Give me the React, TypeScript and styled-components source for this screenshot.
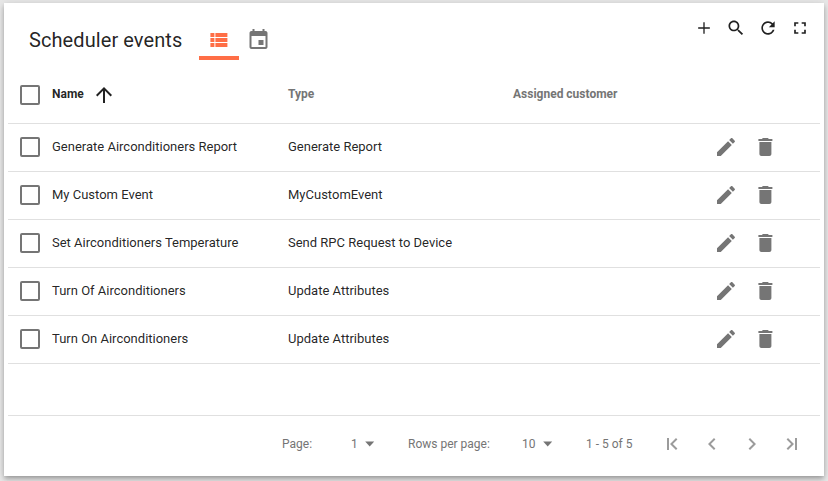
import React from "react";
import styled, { createGlobalStyle } from "styled-components";

const GlobalStyle = createGlobalStyle`
  * { box-sizing: border-box; }
  html, body { margin: 0; height: 100%; background: #e8e8e8; overflow: hidden; }
  body { font-family: Roboto, "Liberation Sans", sans-serif; color: rgba(0, 0, 0, 0.87); }
`;

const Card = styled.main`
  display: flex;
  flex-direction: column;
  width: 820px;
  height: 473px;
  margin: 3px 4px 5px;
  padding: 0 4px;
  background: #fff;
  box-shadow: 0 2px 4px -1px rgba(0, 0, 0, 0.2), 0 4px 5px 0 rgba(0, 0, 0, 0.14),
    0 1px 10px 0 rgba(0, 0, 0, 0.12);
`;

const Toolbar = styled.header`
  display: flex;
  align-items: flex-start;
  height: 61px;
  padding-left: 21px;
`;

const Title = styled.h1`
  width: 170px;
  margin: 25px 0 0;
  font-size: 20px;
  font-weight: 400;
  line-height: 24px;
  letter-spacing: 0.08px;
  white-space: nowrap;
`;

const ViewTab = styled.button<{ $active?: boolean }>`
  display: flex;
  justify-content: center;
  align-items: flex-start;
  width: 40px;
  height: 40px;
  margin-top: 17px;
  padding: 8px 0 0;
  border: 0;
  border-bottom: 4px solid ${(p) => (p.$active ? "#ff6e46" : "transparent")};
  background: none;
  color: ${(p) => (p.$active ? "#ff6e46" : "#757575")};
`;

const Actions = styled.div`
  display: flex;
  margin: 9px 4px 0 auto;
`;

const IconButton = styled.button<{ $size: number; $color: string }>`
  display: flex;
  align-items: center;
  justify-content: center;
  width: ${(p) => p.$size}px;
  height: ${(p) => p.$size}px;
  padding: 0;
  border: 0;
  background: none;
  color: ${(p) => p.$color};
`;

const Glyph = styled.svg`
  display: block;
  flex: none;
  fill: currentColor;
`;

const Row = styled.div`
  display: grid;
  grid-template-columns: 44px 236px 225px 185px 1fr;
  align-items: center;
  height: 48px;
  padding-bottom: 1px;
  border-bottom: 1px solid #e0e0e0;
  font-size: 13px;
  white-space: nowrap;
`;

const HeadRow = styled(Row)`
  height: 60px;
  padding: 2px 0 0;
  font-size: 12px;
  font-weight: 700;
  color: #757575;
`;

const Checkbox = styled.span`
  width: 20px;
  height: 20px;
  margin-left: 12px;
  border: 2px solid #757575;
  border-radius: 2px;
`;

const Label = styled.span`
  padding-bottom: 1px;
`;

const HeadLabel = styled.span`
  padding-bottom: 2px;
`;

const SortLabel = styled.span`
  display: flex;
  align-items: center;
  gap: 8px;
  color: rgba(0, 0, 0, 0.87);
`;

const RowActions = styled.div`
  display: flex;
  padding-left: 8px;
`;

const Spacer = styled.div`
  flex: 1;
  border-bottom: 1px solid #e0e0e0;
`;

const Footer = styled.footer`
  display: flex;
  align-items: center;
  justify-content: flex-end;
  height: 60px;
  padding: 0 8px 4px 0;
  font-size: 12px;
  color: #757575;
  white-space: nowrap;
`;

const FooterText = styled.span<{ $width: number }>`
  width: ${(p) => p.$width}px;
`;

const Select = styled.span<{ $width: number }>`
  display: flex;
  align-items: center;
  gap: 7px;
  width: ${(p) => p.$width}px;
`;

const icons = {
  list: "M4 14h4v-4H4v4zm0 5h4v-4H4v4zM4 9h4V5H4v4zm5 5h12v-4H9v4zm0 5h12v-4H9v4zM9 5v4h12V5H9z",
  event:
    "M17 12h-5v5h5v-5zM16 1v2H8V1H6v2H5c-1.11 0-1.99.9-1.99 2L3 19c0 1.1.89 2 2 2h14c1.1 0 2-.9 2-2V5c0-1.1-.9-2-2-2h-1V1h-2zm3 18H5V8h14v11z",
  add: "M19 12.8h-6.2V19h-1.6v-6.2H5v-1.6h6.2V5h1.6v6.2H19v1.6z",
  search:
    "M15.5 14h-.79l-.28-.27C15.41 12.59 16 11.11 16 9.5 16 5.91 13.09 3 9.5 3S3 5.91 3 9.5 5.91 16 9.5 16c1.61 0 3.09-.59 4.23-1.57l.27.28v.79l5 4.99L20.49 19l-4.99-5zm-6 0C7.01 14 5 11.99 5 9.5S7.01 5 9.5 5 14 7.01 14 9.5 11.99 14 9.5 14z",
  refresh:
    "M17.65 6.35C16.2 4.9 14.21 4 12 4c-4.42 0-7.99 3.58-7.99 8s3.57 8 7.99 8c3.73 0 6.84-2.55 7.73-6h-2.08c-.82 2.33-3.04 4-5.65 4-3.31 0-6-2.69-6-6s2.69-6 6-6c1.66 0 3.14.69 4.22 1.78L13 11h7V4l-2.35 2.35z",
  fullscreen: "M7 14H5v5h5v-2H7v-3zm-2-4h2V7h3V5H5v5zm12 7h-3v2h5v-5h-2v3zM14 5v2h3v3h2V5h-5z",
  arrowUp: "M4 12l1.41 1.41L11 7.83V20h2V7.83l5.58 5.59L20 12l-8-8-8 8z",
  edit: "M3 17.25V21h3.75L17.81 9.94l-3.75-3.75L3 17.25zM20.71 7.04c.39-.39.39-1.02 0-1.41l-2.34-2.34c-.39-.39-1.02-.39-1.41 0l-1.83 1.83 3.75 3.75 1.83-1.83z",
  remove: "M6 19c0 1.1.9 2 2 2h8c1.1 0 2-.9 2-2V7H6v12zM19 4h-3.5l-1-1h-5l-1 1H5v2h14V4z",
  first: "M7 6v12h2V6H7zm10.41 1.41L16 6l-6 6 6 6 1.41-1.41L12.83 12z",
  prev: "M15.41 7.41L14 6l-6 6 6 6 1.41-1.41L10.83 12z",
  next: "M10 6L8.59 7.41 13.17 12l-4.58 4.59L10 18l6-6z",
  last: "M15 6v12h2V6h-2zM8 6L6.59 7.41 11.17 12l-4.58 4.59L8 18l6-6-6-6z",
};

type IconName = keyof typeof icons;

const Icon = ({ name, size = 24, shift = 0 }: { name: IconName; size?: number; shift?: number }) => (
  <Glyph width={size} height={size} viewBox={`${shift} 0 24 24`} aria-hidden="true">
    <path d={icons[name]} />
  </Glyph>
);

const Caret = () => (
  <Glyph width={10} height={6} viewBox="0 0 10 6" aria-hidden="true">
    <path d="M0.2 0.6h9L4.7 5.4z" />
  </Glyph>
);

const events = [
  ["Generate Airconditioners Report", "Generate Report"],
  ["My Custom Event", "MyCustomEvent"],
  ["Set Airconditioners Temperature", "Send RPC Request to Device"],
  ["Turn Of Airconditioners", "Update Attributes"],
  ["Turn On Airconditioners", "Update Attributes"],
];

const toolbarActions: IconName[] = ["add", "search", "refresh", "fullscreen"];
const pageActions: IconName[] = ["first", "prev", "next", "last"];

export default function App() {
  return (
    <>
      <GlobalStyle />
      <Card>
        <Toolbar>
          <Title>Scheduler events</Title>
          <ViewTab $active aria-label="List view"><Icon name="list" shift={0.6} /></ViewTab>
          <ViewTab aria-label="Calendar view"><Icon name="event" shift={0.5} /></ViewTab>
          <Actions>
            {toolbarActions.map((name) => (
              <IconButton key={name} $size={32} $color="#212121" aria-label={name}>
                <Icon name={name} size={20} />
              </IconButton>
            ))}
          </Actions>
        </Toolbar>
        <HeadRow>
          <Checkbox />
          <SortLabel><HeadLabel>Name</HeadLabel><Icon name="arrowUp" /></SortLabel>
          <HeadLabel>Type</HeadLabel>
          <HeadLabel>Assigned customer</HeadLabel>
        </HeadRow>
        {events.map(([name, type]) => (
          <Row key={name}>
            <Checkbox />
            <Label>{name}</Label>
            <Label>{type}</Label>
            <span />
            <RowActions>
              <IconButton $size={40} $color="#757575" aria-label="Edit"><Icon name="edit" /></IconButton>
              <IconButton $size={40} $color="#757575" aria-label="Delete"><Icon name="remove" shift={0.6} /></IconButton>
            </RowActions>
          </Row>
        ))}
        <Spacer />
        <Footer>
          <FooterText $width={69}>Page:</FooterText>
          <Select $width={57}>1<Caret /></Select>
          <FooterText $width={114}>Rows per page:</FooterText>
          <Select $width={64}>10<Caret /></Select>
          <FooterText $width={66}>1 - 5 of 5</FooterText>
          {pageActions.map((name) => (
            <IconButton key={name} $size={40} $color="#9b9b9b" aria-label={name}>
              <Icon name={name} />
            </IconButton>
          ))}
        </Footer>
      </Card>
    </>
  );
}
